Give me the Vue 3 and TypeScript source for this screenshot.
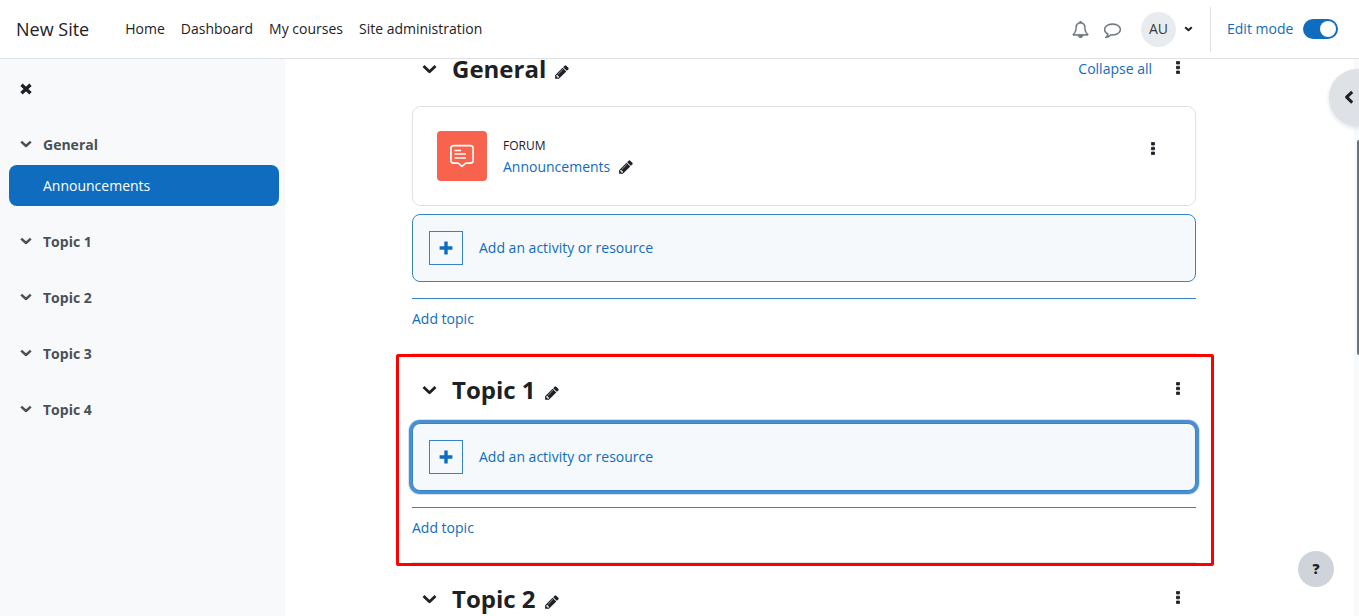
<script setup lang="ts">
import { ref } from 'vue'

interface Activity {
  kind: string
  name: string
}

interface Section {
  id: number
  title: string
  activities: Activity[]
  expanded: boolean
  highlighted?: boolean
}

const navLinks: string[] = ['Home', 'Dashboard', 'My courses', 'Site administration']
const editMode = ref(true)

const indexItems: { title: string; children: string[] }[] = [
  { title: 'General', children: ['Announcements'] },
  { title: 'Topic 1', children: [] },
  { title: 'Topic 2', children: [] },
  { title: 'Topic 3', children: [] },
  { title: 'Topic 4', children: [] },
]

const sections: Section[] = [
  { id: 0, title: 'General', activities: [{ kind: 'Forum', name: 'Announcements' }], expanded: true },
  { id: 1, title: 'Topic 1', activities: [], expanded: true, highlighted: true },
  { id: 2, title: 'Topic 2', activities: [], expanded: false },
]

const pencilPath =
  'M491 1536l91-91-235-235-91 91v107h128v128h107zm523-928q0-22-22-22-10 0-17 7l-542 542q-7 7-7 17 0 22 22 22 10 0 17-7l542-542q7-7 7-17zm-54-192l416 416-832 832h-416v-416zm683 96q0 53-37 90l-166 166-416-416 166-165q36-38 90-38 53 0 91 38l235 234q37 39 37 91z'
const bellPath =
  'M912 1696q0-16-16-16-59 0-101.5-42.5t-42.5-101.5q0-16-16-16t-16 16q0 73 51.5 124.5t124.5 51.5q16 0 16-16zm-666-288h1300q-266-300-266-832 0-51-24-105t-69-103-121.5-80.5-169.5-31.5-169.5 31.5-121.5 80.5-69 103-24 105q0 532-266 832zm1482 0q0 52-38 90t-90 38h-448q0 106-75 181t-181 75-181-75-75-181h-448q-52 0-90-38t-38-90q50-42 91-88t85-119.5 74.5-158.5 50-206 19.5-260q0-152 117-282.5t307-158.5q-8-19-8-39 0-40 28-68t68-28 68 28 28 68q0 20-8 39 190 28 307 158.5t117 282.5q0 139 19.5 260t50 206 74.5 158.5 85 119.5 91 88z'
const commentPath =
  'M896 384q-204 0-381.5 69.5t-282 187.5-104.5 255q0 112 71.5 213.5t201.5 175.5l87 50-27 96q-24 91-70 172 152-63 275-171l43-38 57 6q69 8 130 8 204 0 381.5-69.5t282-187.5 104.5-255-104.5-255-282-187.5-381.5-69.5zm896 512q0 174-120 321.5t-326 233-450 85.5q-70 0-145-8-198 175-460 242-49 14-114 22h-5q-15 0-27-10.5t-16-27.5v-1q-3-4-.5-12t2-10 4.5-9.5l6-9 7-8.5 8-9q7-8 31-34.5t34.5-38 31-39.5 32.5-51 27-59 26-76q-157-89-247.5-220t-90.5-281q0-174 120-321.5t326-233 450-85.5 450 85.5 326 233 120 321.5z'
const dotsPath = 'M.5 .4h3v2.6h-3zM.5 5.2h3v2.6h-3zM.5 10h3v2.6h-3z'
</script>

<template>
  <div class="page">
    <header class="topbar">
      <a class="brand" href="#">New Site</a>
      <nav class="nav" aria-label="Site">
        <a v-for="link in navLinks" :key="link" href="#">{{ link }}</a>
      </nav>
      <div class="tools">
        <button class="tool" type="button" aria-label="Notifications">
          <svg width="17" height="17" viewBox="0 0 1792 1792"><path :d="bellPath" stroke="currentColor" stroke-width="40" /></svg>
        </button>
        <button class="tool" type="button" aria-label="Messages">
          <svg width="17" height="17" viewBox="0 0 1792 1792"><path :d="commentPath" stroke="currentColor" stroke-width="40" /></svg>
        </button>
        <button class="user" type="button" aria-label="User menu">
          <span class="avatar">AU</span>
          <svg width="9" height="6" viewBox="0 0 9 6"><path class="line" d="M1.2 1.2 4.5 4.2 7.8 1.2" stroke-width="2" /></svg>
        </button>
        <div class="edit">
          <label for="edit-mode">Edit mode</label>
          <input id="edit-mode" v-model="editMode" type="checkbox" role="switch" />
        </div>
      </div>
    </header>

    <div class="body">
      <aside class="drawer">
        <button class="close" type="button" aria-label="Close course index">
          <svg width="12" height="12" viewBox="0 0 12 12"><path class="line" d="M1.5 1.8 10.5 10.2M10.5 1.8 1.5 10.2" stroke-width="3.4" stroke-linecap="butt" /></svg>
        </button>
        <nav class="index" aria-label="Course index">
          <div v-for="item in indexItems" :key="item.title">
            <div class="index-row">
              <button class="index-toggle" type="button" :aria-label="'Collapse ' + item.title">
                <svg width="12" height="8" viewBox="0 0 12 8"><path class="line" d="M1.2 1.6 6 6 10.8 1.6" stroke-width="2.4" /></svg>
              </button>
              <a href="#">{{ item.title }}</a>
            </div>
            <a v-for="child in item.children" :key="child" class="index-child" href="#">{{ child }}</a>
          </div>
        </nav>
      </aside>

      <main class="content">
        <div class="course">
          <section
            v-for="section in sections"
            :key="section.id"
            class="section"
            :class="{ highlighted: section.highlighted }"
          >
            <div class="section-head">
              <button class="fold" type="button" :aria-label="'Toggle ' + section.title">
                <svg width="15" height="10" viewBox="0 0 15 10"><path class="line" d="M1.5 2 7.5 7.8 13.5 2" stroke-width="2.8" /></svg>
              </button>
              <h2>{{ section.title }}</h2>
              <button class="pencil" type="button" :aria-label="'Edit name of ' + section.title">
                <svg width="16" height="16" viewBox="0 0 1792 1792"><path :d="pencilPath" /></svg>
              </button>
              <a v-if="section.id === 0" class="collapse-all" href="#">Collapse all</a>
              <button class="kebab" type="button" :aria-label="'Edit ' + section.title">
                <svg width="4" height="13" viewBox="0 0 4 13"><path :d="dotsPath" stroke="currentColor" stroke-width=".8" stroke-linejoin="round" /></svg>
              </button>
            </div>

            <template v-if="section.expanded">
              <article v-for="activity in section.activities" :key="activity.name" class="card">
                <span class="card-icon">
                  <svg width="24" height="24" viewBox="0 0 24 24">
                    <path class="line" d="M3.5 1.6h17a2.6 2.6 0 0 1 2.6 2.6v12.4a2.6 2.6 0 0 1-2.6 2.6h-4.7L12 22.4l-3.8-3.2H3.5A2.6 2.6 0 0 1 .9 16.600V4.200a2.600 2.600 0 0 1 2.600-2.600z" stroke-width="1.700" />
                    <path class="line" d="M4.500 6.500h6.500M4.500 10h11.500M4.500 14h11.500" stroke-width="1.600" />
                  </svg>
                </span>
                <div class="card-text">
                  <span class="kind">{{ activity.kind }}</span>
                  <span class="card-name">
                    <a href="#">{{ activity.name }}</a>
                    <button class="pencil" type="button" :aria-label="'Edit title of ' + activity.name">
                      <svg width="16" height="16" viewBox="0 0 1792 1792"><path :d="pencilPath" /></svg>
                    </button>
                  </span>
                </div>
                <button class="kebab" type="button" :aria-label="'Edit ' + activity.name">
                  <svg width="4" height="13" viewBox="0 0 4 13"><path :d="dotsPath" stroke="currentColor" stroke-width=".8" stroke-linejoin="round" /></svg>
                </button>
              </article>

              <button class="add-activity" type="button">
                <span class="plus">
                  <svg width="14" height="14" viewBox="0 0 14 14"><path class="line" d="M7 .6v12.8M.6 7h12.8" stroke-width="3.4" /></svg>
                </span>
                Add an activity or resource
              </button>

              <div class="add-topic">
                <a href="#">Add topic</a>
              </div>
            </template>
          </section>
        </div>
      </main>
      <div class="track"><div class="thumb"></div></div>
    </div>

    <button class="drawer-open" type="button" aria-label="Open block drawer">
      <svg width="10" height="15" viewBox="0 0 10 15"><path class="line" d="M8.2 1.800 2.600 7.200 8.200 12.600" stroke-width="3" /></svg>
    </button>
    <button class="help" type="button">?</button>
  </div>
</template>

<style>
body {
  margin: 0;
}
</style>

<style scoped>
.page {
  position: relative;
  display: flex;
  flex-direction: column;
  height: 100vh;
  overflow: hidden;
  background: #fff;
  color: #1d2125;
  font: 14px/24px "Open Sans", "Noto Sans", sans-serif;
}

.page * {
  box-sizing: border-box;
}

button {
  padding: 0;
  border: 0;
  background: none;
  color: inherit;
  font: inherit;
  cursor: pointer;
}

a {
  color: #0f6cbf;
  text-decoration: none;
}

svg {
  display: block;
  fill: currentColor;
}

.line {
  fill: none;
  stroke: currentColor;
  stroke-linejoin: round;
}

.topbar {
  position: relative;
  z-index: 2;
  display: flex;
  flex: none;
  align-items: center;
  height: 59px;
  padding: 0 21px 0 16px;
  border-bottom: 1px solid #dee2e6;
  background: #fff;
}

.brand {
  min-width: 73px;
  margin-right: 36px;
  color: #1d2125;
  font-size: 18px;
}

.nav {
  display: flex;
  gap: 16px;
}

.nav a {
  color: #1d2125;
}

.tools {
  display: flex;
  align-items: center;
  margin-left: auto;
}

.tool {
  display: grid;
  place-items: center;
  width: 32px;
  height: 32px;
  color: #6a737b;
}

.user {
  display: flex;
  align-items: center;
  gap: 8px;
  margin: 0 17px 0 13px;
}

.avatar {
  display: grid;
  place-items: center;
  width: 35px;
  height: 35px;
  border-radius: 50%;
  background: #e9ecef;
  color: #343a40;
}

.edit {
  display: flex;
  align-items: center;
  gap: 8px;
  height: 45px;
  padding-left: 16px;
  border-left: 1px solid #dee2e6;
  color: #0f6cbf;
}

.edit label {
  min-width: 68px;
}

.edit input {
  width: 35px;
  height: 20px;
  margin: 0;
  border-radius: 10px;
  background: #8f959e;
  appearance: none;
}

.edit input::before {
  display: block;
  width: 16px;
  height: 16px;
  margin: 2px;
  border-radius: 50%;
  background: #fff;
  content: "";
}

.edit input:checked {
  background: #0f6cbf;
}

.edit input:checked::before {
  margin-left: 17px;
}

.body {
  display: flex;
  flex: 1;
  min-height: 0;
}

.drawer {
  flex: none;
  width: 285px;
  padding: 16px 6px 0 9px;
  background: #f8f9fa;
}

.close {
  display: grid;
  place-items: center;
  width: 34px;
  height: 28px;
}

.index {
  display: flex;
  flex-direction: column;
  gap: 15px;
  margin-top: 21px;
}

.index-row {
  display: flex;
  align-items: center;
  height: 41px;
}

.index-row a {
  color: #495057;
  font-weight: 700;
}

.index-toggle {
  display: grid;
  place-items: center;
  width: 34px;
  height: 36px;
  padding-bottom: 2px;
  color: #495057;
}

.index-child {
  display: flex;
  align-items: center;
  height: 41px;
  padding-left: 34px;
  border-radius: 8px;
  background: #0f6cbf;
  color: #fff;
}

.content {
  flex: 1;
  min-width: 0;
  padding: 0 31px 0 0;
  overflow: hidden;
}

/* The list is scrolled a little way under the top bar. */
.course {
  max-width: 784px;
  margin: -26px auto 0;
}

.section {
  position: relative;
  padding-top: 16px;
  border-bottom: 1px solid #dee2e6;
}

.highlighted::after {
  position: absolute;
  inset: 0 -18px -4px -16px;
  border: 3px solid #f00;
  border-radius: 2px;
  pointer-events: none;
  content: "";
}

.section-head {
  display: flex;
  align-items: center;
  height: 40px;
  margin-bottom: 13px;
}

.fold {
  display: grid;
  place-items: center;
  width: 35px;
  height: 36px;
  margin-right: 5px;
}

h2 {
  margin: 0;
  font-size: 24px;
  line-height: 20px;
  font-weight: 700;
}

.section-head .pencil {
  margin: 6px 0 0 8px;
}

.kebab {
  display: grid;
  place-items: center;
  width: 36px;
  height: 36px;
  margin-left: auto;
}

.section-head .kebab {
  margin-bottom: 4px;
}

.collapse-all {
  margin-left: auto;
}

.collapse-all + .kebab {
  margin-left: 8px;
}

.card {
  display: flex;
  align-items: center;
  height: 100px;
  margin: 17px 0 8px;
  padding: 0 24px;
  border: 1px solid #dee2e6;
  border-radius: 8px;
}

.card-icon {
  display: grid;
  place-items: center;
  width: 50px;
  height: 50px;
  margin-right: 16px;
  border-radius: 4px;
  background: #f7634d;
  color: #fff;
}

.card-text {
  display: flex;
  flex-direction: column;
  padding-top: 3px;
}

.kind {
  font-size: 12px;
  line-height: 18px;
  text-transform: uppercase;
}

.card-name {
  display: flex;
  align-items: center;
  gap: 8px;
}

.card .kebab {
  margin-bottom: 16px;
}

.add-activity {
  display: flex;
  align-items: center;
  gap: 16px;
  width: 100%;
  height: 68px;
  padding: 0 16px;
  border: 1px solid #3584c9;
  border-radius: 8px;
  background: #f5f9fc;
  color: #0f6cbf;
}

.highlighted .add-activity {
  box-shadow: 0 0 0 3px #4a90d0, 0 0 0 4px #d3e3f2;
}

.plus {
  display: grid;
  place-items: center;
  width: 34px;
  height: 34px;
  border: 1px solid #3584c9;
}

.add-topic {
  height: 55px;
  margin-top: 16px;
  padding-top: 8px;
  border-top: 1px solid #3584c9;
}

.track {
  flex: none;
  width: 5px;
  background: #f8f9fa;
}

.thumb {
  width: 2px;
  height: 215px;
  margin: 81px 0 0 auto;
  border-radius: 2px 0 0 2px;
  background: #6a737b;
}

.drawer-open {
  position: absolute;
  top: 69px;
  right: 0;
  display: flex;
  align-items: center;
  width: 30px;
  height: 57px;
  padding-left: 15px;
  border-radius: 30px 0 0 30px;
  background: #dee2e6;
  box-shadow: 0 2px 4px rgba(0, 0, 0, 0.12);
}

.help {
  position: absolute;
  right: 25px;
  bottom: 29px;
  width: 36px;
  height: 36px;
  border-radius: 50%;
  background: #ced4da;
  font-size: 14px;
  font-weight: 800;
}
</style>
